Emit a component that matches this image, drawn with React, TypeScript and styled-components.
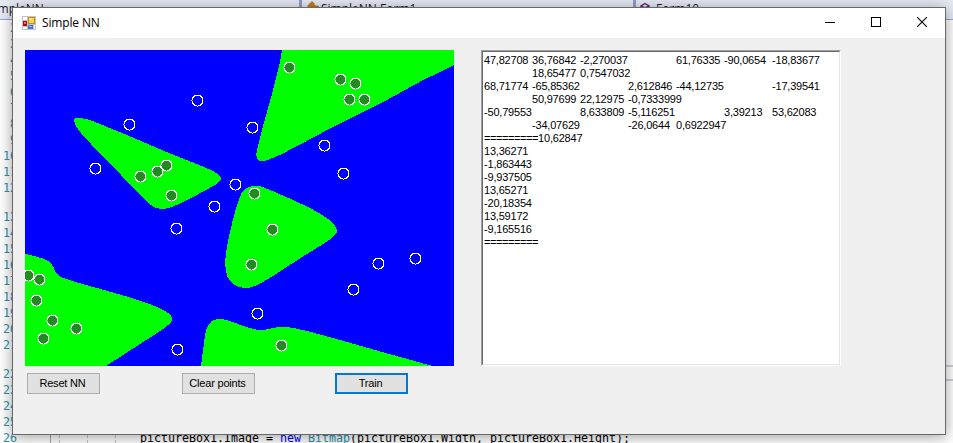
import React from 'react';
import styled, { createGlobalStyle, css } from 'styled-components';

const GlobalStyle = createGlobalStyle`
  *, *::before, *::after { box-sizing: border-box; }
  html, body { margin: 0; padding: 0; overflow: hidden; background: #fff; }
`;

const uiFont = css`
  font-family: 'Liberation Sans', Arial, sans-serif;
  font-size: 11px;
`;

/* ---------- code editor behind the form ---------- */

const Desktop = styled.div`
  position: relative;
  display: flex;
  flex-direction: column;
  width: 953px;
  height: 443px;
  overflow: hidden;
  background: #fff;
`;

const NavBar = styled.div`
  display: grid;
  grid-template-columns: 299px 334px 1fr;
  flex: none;
  height: 20px;
  background: #e6eaf5;
  border-bottom: 1px solid #94a6d4;
`;

const NavItem = styled.div<{ $divided?: boolean }>`
  display: flex;
  align-items: flex-start;
  gap: 4px;
  padding-left: ${(p) => (p.$divided ? '4px' : '0')};
  border-left: ${(p) => (p.$divided ? '3px solid #8f9fcb' : '0')};
  font: 12px/17px 'Open Sans', 'Noto Sans', sans-serif;
  color: #1e1e1e;
  white-space: nowrap;
  overflow: hidden;
`;

const NavLabel = styled.span<{ $shift?: number }>`
  margin-left: ${(p) => p.$shift ?? 0}px;
`;

const Editor = styled.div`
  display: flex;
  flex: 1;
  min-height: 0;
  font: 11.63px/16px 'DejaVu Sans Mono', 'Liberation Mono', monospace;
`;

const Gutter = styled.div`
  display: flex;
  flex-direction: column;
  flex: none;
  width: 17px;
  color: #2b91af;
  text-align: right;
`;

const LineNumber = styled.div<{ $lens?: boolean }>`
  flex: none;
  height: 16px;
  margin-top: ${(p) => (p.$lens ? '13px' : '0')};
`;

const CodePane = styled.div`
  display: flex;
  flex: 1;
  align-items: flex-end;
  margin-left: 33px;
  border-left: 1px solid #a5a5a5;
`;

const CodeLine = styled.div`
  display: flex;
  height: 13px;
  line-height: 16px;
  white-space: pre;
  color: #000;
`;

const IndentGuide = styled.span<{ $space: number }>`
  width: ${(p) => p.$space}px;
  border-right: 1px dashed #c8c8c8;
`;

const CodeText = styled.span`
  margin-left: 24px;
`;

const Keyword = styled.span`
  color: #0000ff;
`;

const TypeName = styled.span`
  color: #2b91af;
`;

const EditorEdge = styled.div`
  display: flex;
  align-items: flex-end;
  width: 12px;
  padding-bottom: 62px;
`;

const EdgeBand = styled.div`
  width: 100%;
  height: 16px;
  border: solid #cdd0da;
  border-width: 2px 0;
`;

/* ---------- form window ---------- */

const Window = styled.section`
  position: absolute;
  left: 12px;
  top: 7px;
  display: flex;
  flex-direction: column;
  width: 934px;
  height: 428px;
  border: 1px solid #686868;
  background: #f0f0f0;
  box-shadow: 0 2px 14px rgba(0, 0, 0, 0.38);
`;

const TitleBar = styled.header`
  display: flex;
  align-items: center;
  flex: none;
  height: 30px;
  padding-left: 9px;
  background: #fff;
`;

const Title = styled.h1`
  flex: 1;
  margin: 0 0 0 6px;
  font: 400 12px/16px 'Open Sans', 'Noto Sans', sans-serif;
  letter-spacing: -0.15px;
  color: #000;
`;

const CaptionButton = styled.button`
  display: flex;
  align-items: center;
  justify-content: center;
  width: 46px;
  height: 30px;
  padding: 0 0 2px;
  border: 0;
  background: transparent;
`;

const Client = styled.main`
  display: flex;
  align-items: flex-start;
  gap: 27px;
  padding: 12px;
`;

const LeftPane = styled.div`
  display: flex;
  flex-direction: column;
  gap: 7px;
  width: 429px;
`;

const Plot = styled.svg`
  display: block;
  width: 429px;
  height: 316px;
  background: #00f;
`;

const ButtonRow = styled.div`
  display: grid;
  grid-template-columns: 155px 153px 73px;
  padding-left: 2px;
`;

const PushButton = styled.button<{ $focused?: boolean }>`
  ${uiFont}
  width: 73px;
  height: 21px;
  padding: 0 2px 0 0;
  border: ${(p) => (p.$focused ? '2px solid #0078d7' : '1px solid #adadad')};
  background: #e1e1e1;
  color: #000;
  letter-spacing: -0.2px;
  line-height: 17px;
  text-align: center;
  white-space: nowrap;
`;

const LogFrame = styled.div`
  width: 360px;
  height: 316px;
  border: 1px solid;
  border-color: #a0a0a0 #fff #fff #a0a0a0;
`;

const Log = styled.pre`
  ${uiFont}
  height: 100%;
  margin: 0;
  padding: 2px 0 0 1px;
  border: 1px solid;
  border-color: #696969 #e3e3e3 #e3e3e3 #696969;
  background: #fff;
  color: #000;
  line-height: 13px;
  letter-spacing: -0.2px;
  tab-size: 48px;
`;

const Rule = styled.span`
  letter-spacing: -0.42px;
`;

/* ---------- data ---------- */

type Pt = [number, number];

const regions: Pt[][] = [
  [[74, 119.3], [76, 118], [87.3, 119.3], [103, 125.3], [133.3, 137.7], [160, 149.3], [186.7, 160], [210, 169.7], [218.3, 174.3], [221, 178.7], [218.3, 182.7], [210, 187.7], [186.7, 200.3], [173.3, 206.3], [163.3, 209], [153.3, 206.7], [143.3, 198.3], [130, 184.3], [100, 153.3], [83.3, 135.7], [76, 126]],
  [[282, 50], [279.3, 65], [271.7, 95], [263.3, 125], [258.3, 145], [256.3, 154], [257.7, 159.3], [261.7, 161], [268.3, 159.7], [281.7, 154], [303.3, 142.7], [340, 123.3], [386.7, 100], [420, 81.7], [454, 65], [480, 51], [480, 30], [286, 30]],
  [[255, 185.7], [263.3, 187.3], [280, 194.3], [300, 203.3], [316.7, 211.7], [328.3, 219.3], [335, 226], [337, 230.7], [335, 235], [326.7, 241.7], [300, 258.3], [271.7, 276.7], [255, 286], [245, 288], [235, 285], [227.7, 277.3], [225.3, 265], [227.3, 245], [233.3, 218.3], [239.3, 198.3], [245, 189]],
  [[201, 366], [204, 343.3], [206.7, 328.3], [211.7, 321.3], [219.3, 319], [230, 321], [245, 326.7], [260, 330], [270, 328.7], [281.7, 326.7], [298.3, 329], [326.7, 336.3], [386.7, 353.3], [430.7, 365.5], [460, 374], [460, 390], [198, 390]],
  [[25, 253.7], [36.7, 256.7], [48.3, 261], [53.3, 266.7], [56, 272.7], [61.7, 277.3], [80, 283.3], [106.7, 290.7], [140, 300.7], [160, 308.3], [168.3, 313.3], [172, 318.3], [170, 323.3], [160, 331], [133.3, 348.3], [106, 366], [80, 383], [5, 390], [5, 249]],
];

const bluePoints: Pt[] = [
  [197, 100], [129, 124], [95, 168], [176, 228], [214, 206], [235, 184], [252, 127],
  [324, 145], [343, 173], [378, 263], [415, 258], [353, 289], [257, 313], [177, 349],
];

const greenPoints: Pt[] = [
  [140, 176], [157, 171], [166, 165], [171, 195], [289, 67], [340, 79], [355, 83],
  [349, 99], [364, 99], [254, 193], [272, 229], [251, 264], [281, 345], [28, 275],
  [39, 279], [36, 300], [52, 320], [76, 328], [43, 338],
];

/* Values as wide as a 48px tab column push the next one a column further. */
const weights = [
  '47,82708\t36,76842\t-2,270037\t61,76335\t-90,0654\t-18,83677',
  '\t18,65477\t0,7547032',
  '68,71774\t-65,85362\t2,612846\t-44,12735\t-17,39541',
  '\t50,97699\t22,12975\t-0,7333999',
  '-50,79553\t8,633809\t-5,116251\t3,39213\t53,62083',
  '\t-34,07629\t-26,0644\t0,6922947',
].join('\n');

const outputs = [
  '10,62847',
  '13,36271',
  '-1,863443',
  '-9,937505',
  '13,65271',
  '-20,18354',
  '13,59172',
  '-9,165516',
].join('\n');

const lineNumbers = Array.from({ length: 25 }, (_, i) => i + 2);

/* Closed Catmull-Rom spline through the boundary samples. */
function smooth(points: Pt[]): string {
  const n = points.length;
  const at = (i: number) => points[(i + n) % n];
  let d = `M${points[0][0]} ${points[0][1]}`;
  for (let i = 0; i < n; i++) {
    const [a, b, c, e] = [at(i - 1), at(i), at(i + 1), at(i + 2)];
    const len = Math.hypot(c[0] - b[0], c[1] - b[1]);
    const t1 = len / (len + Math.hypot(b[0] - a[0], b[1] - a[1]));
    const t2 = len / (len + Math.hypot(e[0] - c[0], e[1] - c[1]));
    const x1 = b[0] + ((c[0] - a[0]) * t1) / 3;
    const y1 = b[1] + ((c[1] - a[1]) * t1) / 3;
    const x2 = c[0] - ((e[0] - b[0]) * t2) / 3;
    const y2 = c[1] - ((e[1] - b[1]) * t2) / 3;
    d += `C${x1} ${y1} ${x2} ${y2} ${c[0]} ${c[1]}`;
  }
  return d + 'Z';
}

/* ---------- drawings ---------- */

const FormIcon = () => (
  <svg width="14" height="14" viewBox="0 0 14 14" shapeRendering="crispEdges">
    <rect width="14" height="14" fill="#c3c3c3" />
    <path d="M1 1h4v3H1zM1 11h4v2H1zM12 9h1v4h-1z" fill="#fff" />
    <rect x="6" y="1" width="7" height="7" fill="#c98f10" />
    <rect x="7" y="2" width="5" height="5" fill="#fbd04a" />
    <rect x="7" y="2" width="3" height="2" fill="#fde794" />
    <rect x="1" y="5" width="4" height="5" fill="#a3120c" />
    <rect x="2" y="6" width="2" height="2" fill="#e0776d" />
    <rect x="6" y="9" width="5" height="4" fill="#3f76d6" />
    <rect x="7" y="10" width="3" height="1" fill="#8db4f3" />
  </svg>
);

const ClassIcon = () => (
  <svg width="15" height="14" viewBox="0 0 15 14">
    <path d="M1 6 6 1l3 3-1 1 5 1v2H8L5 10z" fill="#c27d1a" />
  </svg>
);

const MethodIcon = () => (
  <svg width="12" height="14" viewBox="0 0 12 14">
    <path d="M5 3.5 9 6v5l-4 2-4-2V6zM1 6l4 2 4-2M5 8v5" fill="none" stroke="#68217a" strokeWidth="1.4" />
  </svg>
);

const MinimizeIcon = () => (
  <svg width="10" height="10" shapeRendering="crispEdges">
    <path d="M0 5.5h10" stroke="#000" />
  </svg>
);

const MaximizeIcon = () => (
  <svg width="10" height="10" shapeRendering="crispEdges">
    <rect x=".5" y=".5" width="9" height="9" fill="none" stroke="#000" />
  </svg>
);

const CloseIcon = () => (
  <svg width="10" height="10">
    <path d="M0 0l10 10M10 0L0 10" stroke="#000" strokeWidth="1.1" />
  </svg>
);

const Marker = ({ at: [x, y], fill }: { at: Pt; fill: string }) => (
  <circle cx={x + 0.5} cy={y + 0.5} r="5.5" fill={fill} stroke="#fff" />
);

export default function App() {
  return (
    <>
      <GlobalStyle />
      <Desktop>
        <NavBar>
          <NavItem><NavLabel $shift={-12}>SimpleNN</NavLabel></NavItem>
          <NavItem $divided><ClassIcon /><NavLabel $shift={-4}>SimpleNN.Form1</NavLabel></NavItem>
          <NavItem $divided><MethodIcon /><NavLabel>Form10</NavLabel></NavItem>
        </NavBar>
        <Editor>
          <Gutter>
            {lineNumbers.map((n) => (
              <LineNumber key={n} $lens={n === 13 || n === 22}>{n}</LineNumber>
            ))}
          </Gutter>
          <CodePane>
            <CodeLine>
              <IndentGuide $space={9} />
              <IndentGuide $space={28} />
              <IndentGuide $space={28} />
              <CodeText>
                pictureBox1.Image = <Keyword>new</Keyword> <TypeName>Bitmap</TypeName>
                (pictureBox1.Width, pictureBox1.Height);
              </CodeText>
            </CodeLine>
          </CodePane>
          <EditorEdge><EdgeBand /></EditorEdge>
        </Editor>

        <Window>
          <TitleBar>
            <FormIcon />
            <Title>Simple NN</Title>
            <CaptionButton aria-label="Minimize"><MinimizeIcon /></CaptionButton>
            <CaptionButton aria-label="Maximize"><MaximizeIcon /></CaptionButton>
            <CaptionButton aria-label="Close"><CloseIcon /></CaptionButton>
          </TitleBar>
          <Client>
            <LeftPane>
              <Plot viewBox="25 50 429 316" shapeRendering="crispEdges">
                {regions.map((r, i) => <path key={i} d={smooth(r)} fill="#0f0" />)}
                {bluePoints.map((p) => <Marker key={p.join()} at={p} fill="#00f" />)}
                {greenPoints.map((p) => <Marker key={p.join()} at={p} fill="#228b22" />)}
              </Plot>
              <ButtonRow>
                <PushButton>Reset NN</PushButton>
                <PushButton>Clear points</PushButton>
                <PushButton $focused>Train</PushButton>
              </ButtonRow>
            </LeftPane>
            <LogFrame>
              <Log>
                {weights}
                {'\n'}
                <Rule>=========</Rule>
                {outputs}
                {'\n'}
                <Rule>=========</Rule>
              </Log>
            </LogFrame>
          </Client>
        </Window>
      </Desktop>
    </>
  );
}
